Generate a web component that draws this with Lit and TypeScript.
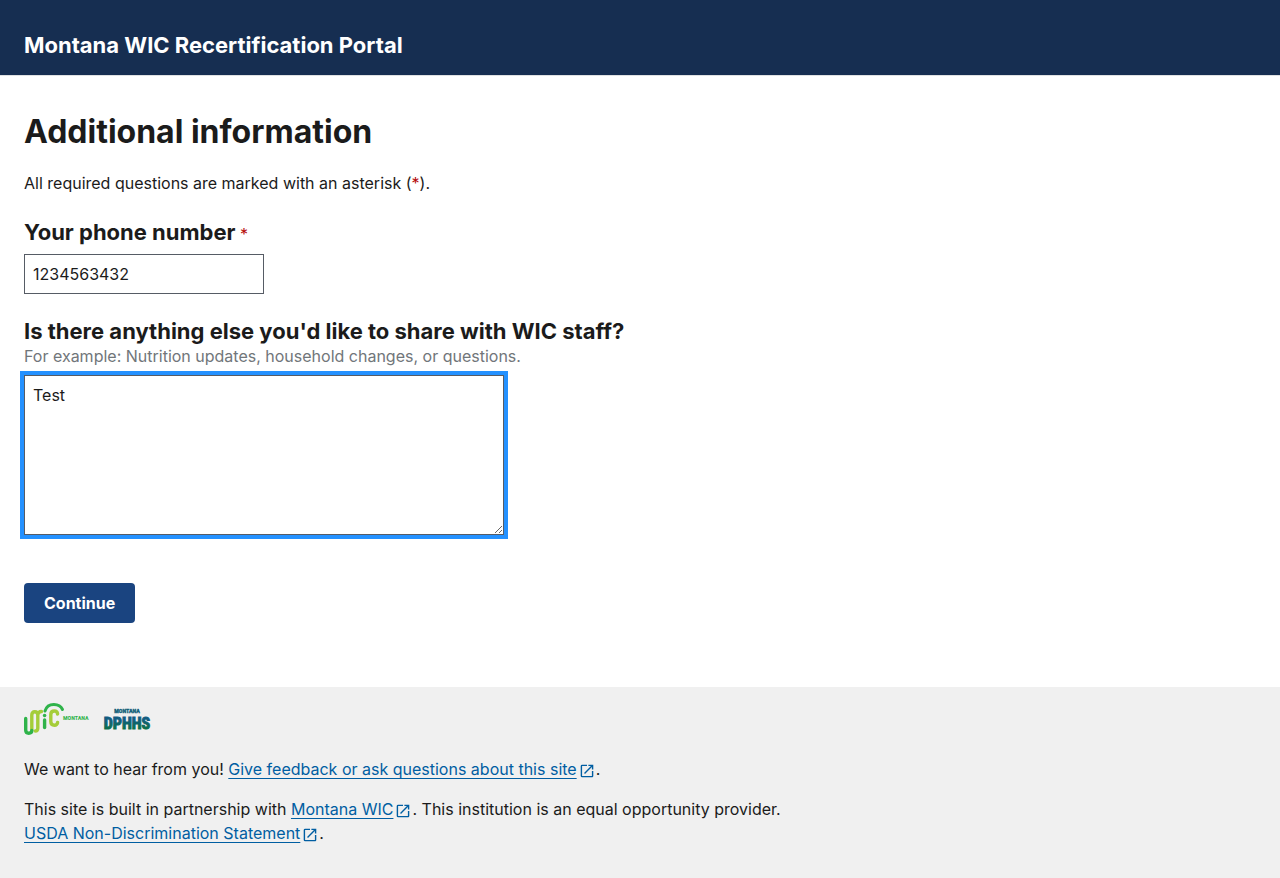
import { LitElement, html, css, svg } from "lit";
import { customElement, property } from "lit/decorators.js";

@customElement("external-link")
class ExternalLink extends LitElement {
  @property() href = "#";

  static styles = css`
    a {
      color: #005ea2;
      text-decoration: underline;
      text-decoration-thickness: 1px;
      text-underline-offset: 3px;
      text-decoration-skip-ink: none;
    }
    .icon {
      width: 14px;
      height: 14px;
      margin: 0 2px 0 3px;
      vertical-align: -3px;
      fill: #005ea2;
    }
  `;

  render() {
    return html`<a href=${this.href}><slot></slot></a><svg class="icon" viewBox="2 2 20 20" aria-hidden="true"><path d="M19 19H5V5h7V3H5a2 2 0 0 0-2 2v14a2 2 0 0 0 2 2h14c1.1 0 2-.9 2-2v-7h-2v7zM14 3v2h3.59l-9.83 9.83 1.41 1.41L19 6.41V10h2V3h-7z"></path></svg>`;
  }
}

const wicLogo = svg`
  <g fill="none" stroke-width="3.4" stroke-linecap="round">
    <path stroke="#a5cd39" d="M7.800 27V12Q7.800 8.800 10.800 8.800Q13.800 8.800 13.800 12V25Q13.800 28 11.300 28M13.800 25V12Q13.800 8.500 17.500 8.500"></path>
    <path stroke="#2fb34a" d="M1.700 15.500V27Q1.700 30.200 4.800 30.200Q7.800 30.200 7.800 27.500"></path>
    <path stroke="#2fb34a" d="M20.600 17V24.500"></path>
    <path stroke="#a5cd39" d="M33.600 11Q33.300 8 30.400 8Q26.800 8 26.800 11.500V18.500Q26.800 22.200 30.400 22.200Q33.200 22.200 33.600 19.500"></path>
    <path stroke="#2fb34a" stroke-width="3" d="M21 8C22.500 3.500 26 1.500 30 1.600C34 1.700 37 3.500 38.500 6.500"></path>
  </g>
  <circle cx="20.600" cy="12.500" r="1.800" fill="#2fb34a"></circle>
  <text class="wic-word" x="39" y="17">MONTANA</text>
`;

@customElement("app-root")
class AppRoot extends LitElement {
  static styles = css`
    :host {
      display: block;
      font-family: "Inter", sans-serif;
      font-size: 16px;
      line-height: 24px;
      color: #1b1b1b;
      background: #fff;
    }
    header {
      background: #162e51;
      border-bottom: 1px solid #dfe1e2;
      padding: 32px 24px 16px;
      color: #fff;
      font-size: 22px;
      font-weight: 700;
      line-height: 27px;
    }
    main {
      padding: 36px 24px 64px;
    }
    h1 {
      margin: 0 0 19px;
      font-size: 32px;
      line-height: 40px;
      font-weight: 700;
    }
    p {
      margin: 0;
    }
    .required {
      color: #b50909;
    }
    .field {
      display: flex;
      flex-direction: column;
      align-items: flex-start;
      margin-top: 24px;
    }
    .label {
      font-size: 22px;
      font-weight: 700;
      line-height: 27px;
    }
    .label .required {
      font-size: 16px;
      font-weight: 400;
      line-height: 16px;
    }
    .hint {
      color: #71767a;
      line-height: 22px;
    }
    .input {
      box-sizing: border-box;
      width: 100%;
      margin: 8px 0 0;
      padding: 8px;
      border: 1px solid #565c65;
      border-radius: 0;
      background: #fff;
      color: #1b1b1b;
      font: inherit;
    }
    .phone {
      max-width: 240px;
      height: 40px;
    }
    .notes {
      max-width: 480px;
      height: 160px;
      line-height: 22px;
      outline: 4px solid #2491ff;
    }
    .continue {
      display: block;
      margin-top: 48px;
      padding: 12px 20px;
      border: 0;
      border-radius: 4px;
      background: #1a4480;
      color: #fff;
      font: inherit;
      font-weight: 700;
      line-height: 16px;
    }
    footer {
      background: #f0f0f0;
      padding: 16px 24px 33px;
    }
    footer p {
      margin-top: 16px;
    }
    .logos {
      display: flex;
      gap: 16px;
      margin-bottom: 22px;
    }
    .logos svg {
      display: block;
      height: 32px;
      overflow: visible;
    }
    .wic-word {
      font: 700 6px "Roboto Condensed", "Liberation Sans Narrow", "Roboto", sans-serif;
      fill: #2fb34a;
    }
    .dphhs-small {
      font: 700 6px "Roboto Condensed", "Liberation Sans Narrow", "Roboto", sans-serif;
      fill: #12607a;
      stroke: #12607a;
      stroke-width: 0.4px;
    }
    .dphhs-big {
      font: 700 16px "Roboto Condensed", "Liberation Sans Narrow", "Roboto", sans-serif;
      fill: url(#teal);
      stroke: url(#teal);
      stroke-width: 1px;
    }
  `;

  render() {
    return html`
      <header>Montana WIC Recertification Portal</header>
      <main>
        <h1>Additional information</h1>
        <p>All required questions are marked with an asterisk (<span class="required">*</span>).</p>
        <form @submit=${(e: Event) => e.preventDefault()}>
          <div class="field">
            <label class="label" for="phone">Your phone number<span class="required"> *</span></label>
            <input class="input phone" id="phone" type="tel" .value=${"1234563432"} required />
          </div>
          <div class="field">
            <label class="label" for="notes">Is there anything else you'd like to share with WIC staff?</label>
            <span class="hint" id="notes-hint">For example: Nutrition updates, household changes, or questions.</span>
            <textarea class="input notes" id="notes" aria-describedby="notes-hint" .value=${"Test"}></textarea>
          </div>
          <button class="continue" type="submit">Continue</button>
        </form>
      </main>
      <footer>
        <div class="logos">
          <svg width="65" viewBox="0 0 65 32" role="img" aria-label="Montana WIC">${wicLogo}</svg>
          <svg width="45" viewBox="0 0 45 32" role="img" aria-label="Montana DPHHS">
            <defs>
              <linearGradient id="teal" x1="0" y1="0" x2="0" y2="1">
                <stop offset="0.3" stop-color="#125d80"></stop>
                <stop offset="0.8" stop-color="#0b7048"></stop>
              </linearGradient>
            </defs>
            <text class="dphhs-small" x="22" y="10" text-anchor="middle">MONTANA</text>
            <text class="dphhs-big" x="22" y="26" text-anchor="middle">DPHHS</text>
          </svg>
        </div>
        <p>We want to hear from you! <external-link>Give feedback or ask questions about this site</external-link>.</p>
        <p>
          This site is built in partnership with <external-link>Montana WIC</external-link>. This institution is an equal opportunity provider.<br />
          <external-link>USDA Non-Discrimination Statement</external-link>.
        </p>
      </footer>
    `;
  }
}
